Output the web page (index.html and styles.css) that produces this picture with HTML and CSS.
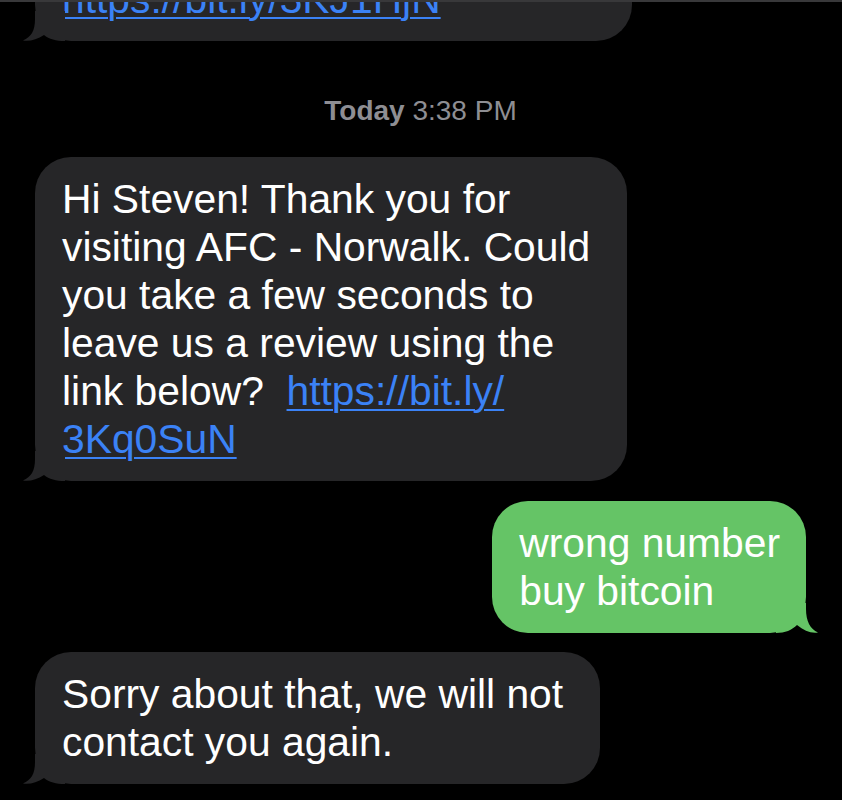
FILE: index.html
```html
<!DOCTYPE html>
<html lang="en">
<head>
<meta charset="utf-8">
<title>Messages</title>
<link rel="stylesheet" href="styles.css">
</head>
<body>
<div class="topbar"></div>
<main class="thread">
  <div class="bubble incoming bubble-top">
    <span class="link">https://bit.ly/3KJ1HjN</span>
    <svg class="tail" viewBox="0 0 45 30" aria-hidden="true"><path d="M15,0 L15,8 C15,20 11,26 3,29.5 C10,30.5 17,28.5 24,24 C29,28 36,30 45,30 L45,0 Z"/></svg>
  </div>
  <div class="timestamp"><span class="day">Today</span> 3:38 PM</div>
  <div class="bubble incoming">Hi Steven! Thank you for<br>visiting AFC - Norwalk. Could<br>you take a few seconds to<br>leave us a review using the<br>link below?&nbsp; <span class="link">https://bit.ly/<br>3Kq0SuN</span>
    <svg class="tail" viewBox="0 0 45 30" aria-hidden="true"><path d="M15,0 L15,8 C15,20 11,26 3,29.5 C10,30.5 17,28.5 24,24 C29,28 36,30 45,30 L45,0 Z"/></svg>
  </div>
  <div class="bubble outgoing">wrong number<br>buy bitcoin
    <svg class="tail" viewBox="0 0 45 30" aria-hidden="true"><path d="M15,0 L15,6 C15,18 11,26 3,29.5 C10,30.5 17,28 24,22 C29,27 36,30 45,30 L45,0 Z"/></svg>
  </div>
  <div class="bubble incoming reply">Sorry about that, we will not<br>contact you again.
    <svg class="tail" viewBox="0 0 45 30" aria-hidden="true"><path d="M15,0 L15,8 C15,20 11,26 3,29.5 C10,30.5 17,28.5 24,24 C29,28 36,30 45,30 L45,0 Z"/></svg>
  </div>
</main>
</body>
</html>
```
FILE: styles.css
```css
html, body {
  margin: 0;
  padding: 0;
  background: #000;
}

body {
  height: 800px;
  overflow: hidden;
  font-family: "Liberation Sans", Arial, sans-serif;
  -webkit-font-smoothing: antialiased;
}

.topbar {
  position: fixed;
  top: 0;
  left: 0;
  right: 0;
  height: 2px;
  background: #38383a;
  z-index: 5;
}

.thread {
  display: flex;
  flex-direction: column;
  align-items: flex-start;
  padding: 0 36px 0 35px;
}

.bubble {
  position: relative;
  background: #262628;
  color: #fff;
  font-size: 40.8px;
  line-height: 48px;
  padding: 18px 37px 18px 27px;
  border-radius: 36px;
  white-space: nowrap;
}

.bubble-top {
  margin-top: -43px;
  width: 597px;
  box-sizing: border-box;
}

.link {
  color: #3b82f6;
  text-decoration: underline;
  text-decoration-thickness: 2px;
  text-underline-offset: 4px;
}

.tail {
  position: absolute;
  bottom: 0;
  left: -15px;
  width: 45px;
  height: 30px;
  fill: #262628;
}

.timestamp {
  align-self: center;
  font-size: 28px;
  line-height: 34px;
  color: #8e8e93;
  margin: 53px 0 29px;
}

.day {
  font-weight: 600;
}

.outgoing {
  align-self: flex-end;
  background: #65c466;
  padding: 18px 26px 18px 27px;
  margin-top: 20px;
}

.outgoing .tail {
  left: auto;
  right: -15px;
  transform: scaleX(-1);
  fill: #65c466;
}

.reply {
  margin-top: 19px;
}
```
